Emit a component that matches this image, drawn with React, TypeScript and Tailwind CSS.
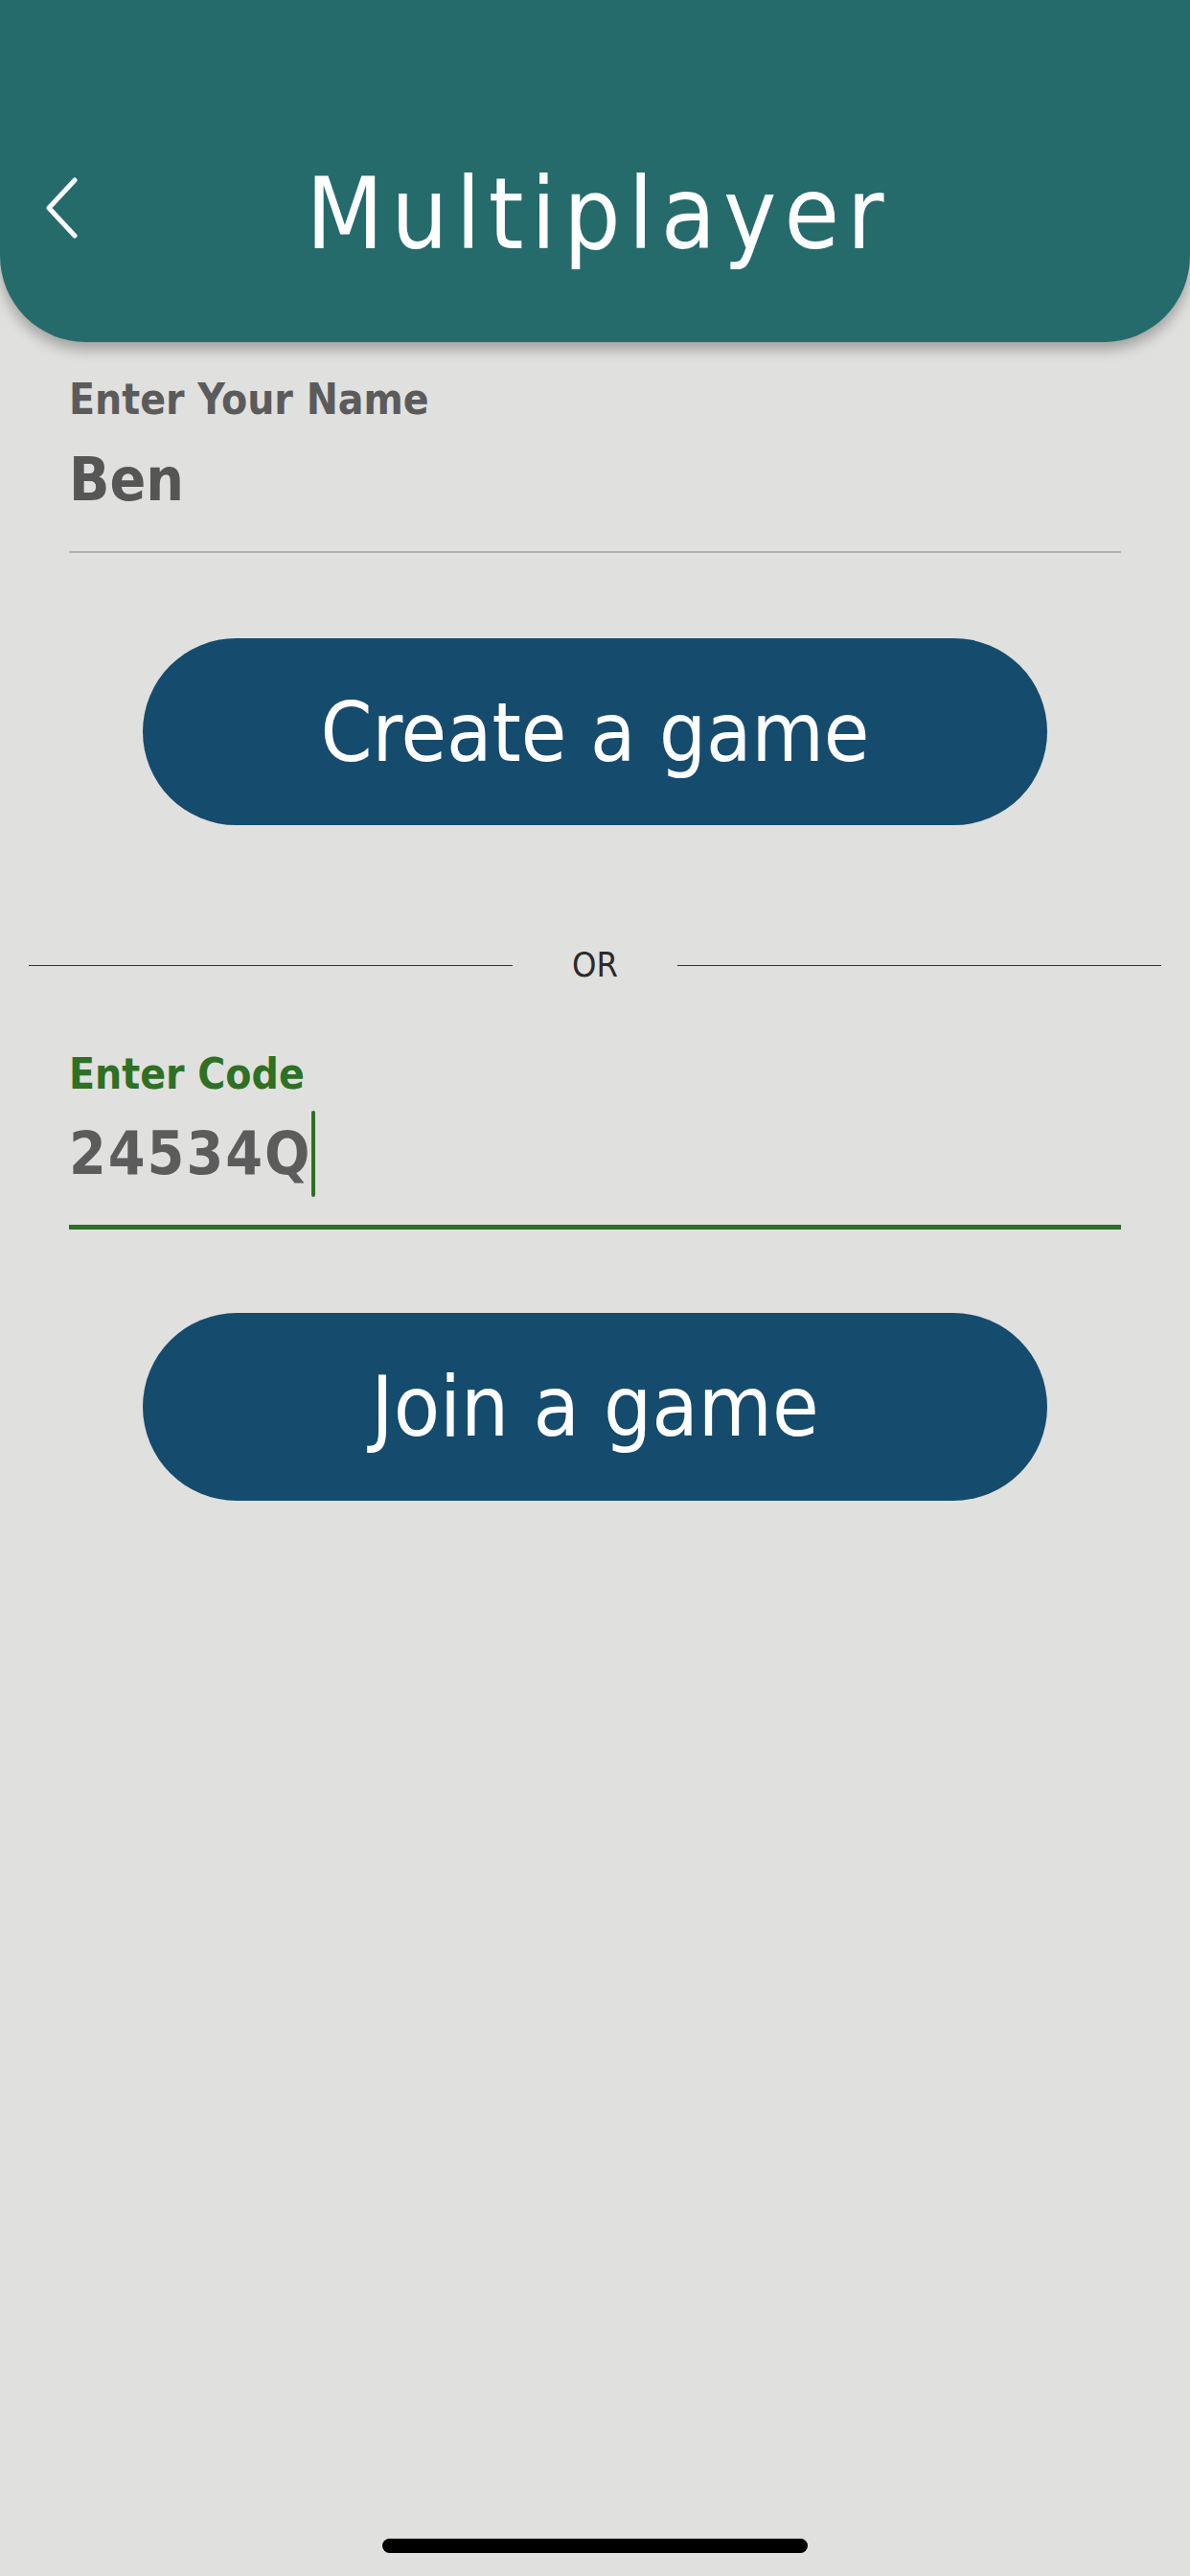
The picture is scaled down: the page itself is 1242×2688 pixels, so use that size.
import React from "react";

const font = { fontFamily: '"DejaVu Sans Condensed", "DejaVu Sans", sans-serif' };

const BackIcon = () => (
  <svg width="40" height="64" viewBox="0 0 40 64" fill="none">
    <path d="M33 3 L6 32 L33 61" stroke="white" strokeWidth="5" strokeLinecap="round" strokeLinejoin="round" />
  </svg>
);

const Multiplayer = () => {
  return (
    <div className="min-h-[2688px] w-full bg-[#e0e0de] flex flex-col" style={font}>
      {/* header */}
      <div className="h-[357px] bg-[#256b6c] rounded-b-[90px] shadow-[0_8px_14px_rgba(0,0,0,0.28)] pt-[171px]">
        <div className="grid grid-cols-[1fr_auto_1fr] items-center">
          <div className="pl-[45px] flex items-center -mt-[12px]">
            <BackIcon />
          </div>
          <h1 className="text-[104px] leading-none text-white tracking-[8px] pl-[8px]">Multiplayer</h1>
          <div />
        </div>
      </div>

      <div className="px-[72px] pt-[38px]">
        <label className="block text-[44px] leading-none font-bold text-[#5b5b5b]">Enter Your Name</label>
        <div className="mt-[31px] pb-[43px] border-b-2 border-[#b3b3b3] text-[62px] leading-none font-bold text-[#565656]">
          Ben
        </div>
      </div>

      <div className="flex justify-center mt-[89px]">
        <button className="w-[944px] h-[195px] rounded-full bg-[#154c6d] text-white text-[86px] leading-none flex items-center justify-center">
          Create a game
        </button>
      </div>

      <div className="flex items-center px-[30px] mt-[128px]">
        <div className="flex-1 h-px bg-[#333]" />
        <span className="mx-[62px] text-[36px] leading-none font-extralight text-[#2a2a2a]">OR</span>
        <div className="flex-1 h-px bg-[#333]" />
      </div>

      <div className="px-[72px] pt-[74px]">
        <label className="block text-[44px] leading-none font-bold text-[#2e7024]">Enter Code</label>
        <div className="mt-[30px] pb-[43px] border-b-[5px] border-[#2e7024] text-[62px] leading-none font-bold tracking-[2px] text-[#5c5c5c] flex items-center">
          <span>24534Q</span>
          <span className="w-[4px] h-[90px] bg-[#2e7024] rounded-full -my-[14px]" />
        </div>
      </div>

      <div className="flex justify-center mt-[87px]">
        <button className="w-[944px] h-[196px] rounded-full bg-[#154c6d] text-white text-[88px] leading-none flex items-center justify-center">
          Join a game
        </button>
      </div>

      <div className="mt-auto mb-[24px] flex justify-center">
        <div className="w-[444px] h-[15px] rounded-full bg-black" />
      </div>
    </div>
  );
};

export default function App() {
  return <Multiplayer />;
}
